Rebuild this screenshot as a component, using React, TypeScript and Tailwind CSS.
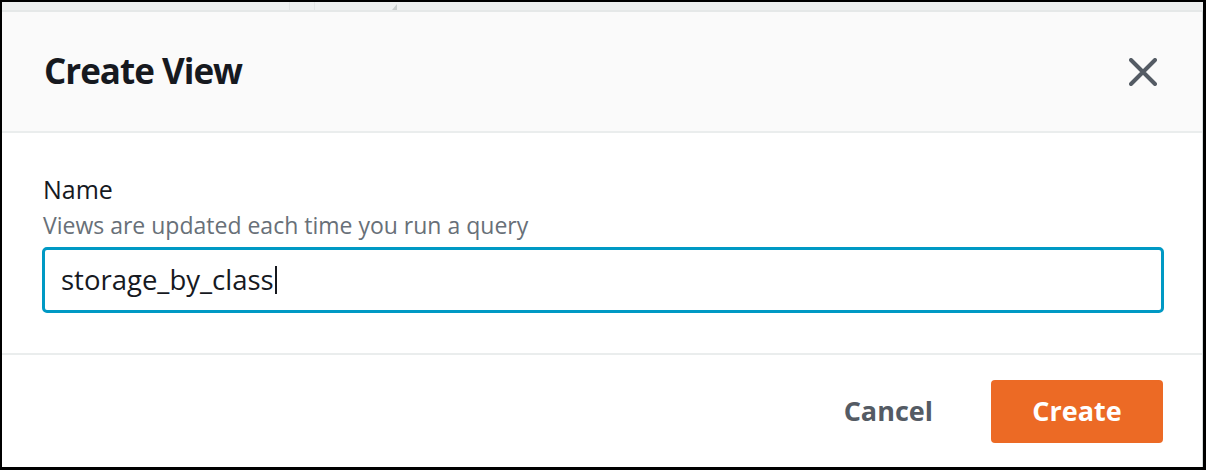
export default function App() {
  return (
    <div className="w-[1206px] h-[470px] bg-black pt-[2px] pl-[2px] pr-[3px] pb-[3px] flex flex-col font-['Open_Sans',sans-serif]">
      {/* page behind the dialog */}
      <div className="relative h-[8px] bg-[#eef0f0] shrink-0">
        <div className="absolute left-[287px] top-0 h-full w-px bg-[#e2e5e5]" />
        <div className="absolute left-[312px] top-0 h-full w-px bg-[#e2e5e5]" />
        <div className="absolute left-[390px] top-[2px] w-0 h-0 border-l-[5px] border-l-transparent border-b-[6px] border-b-[#c9cdcd]" />
      </div>

      <div className="flex-1 flex flex-col bg-white border-t-2 border-[#e5e8e8] border-r border-r-[#d5dbdb]">
        {/* header */}
        <div className="h-[121px] shrink-0 bg-[#fafafa] border-b-2 border-[#eaeded] flex items-center justify-between pl-[42px] pr-[45px]">
          <h1 className="text-[35px] font-bold text-[#16191f] tracking-[-1px]">Create View</h1>
          <svg width="28" height="28" viewBox="0 0 28 28" className="text-[#545b64]">
            <path d="M2 2 L26 26 M26 2 L2 26" stroke="currentColor" strokeWidth="4" strokeLinecap="round" />
          </svg>
        </div>

        {/* body */}
        <div className="h-[222px] shrink-0 border-b-2 border-[#eaeded] pl-[40px] pr-[38px] pt-[40px]">
          <div className="text-[25px] leading-[32px] text-[#16191f] pl-px">Name</div>
          <div className="text-[23px] leading-[31px] text-[#687078] mt-[5px] pl-px">Views are updated each time you run a query</div>
          <div className="mt-[6px] h-[66px] border-[3px] border-[#0099c4] rounded-[5px] flex items-center pl-[16px]">
            <span className="text-[27.5px] text-[#16191f]">storage_by_class</span>
            <span className="w-[2px] h-[28px] bg-[#16191f] ml-px" />
          </div>
        </div>

        {/* footer */}
        <div className="flex-1 flex items-center justify-end pr-[39px] gap-[58px]">
          <button className="text-[27px] font-bold text-[#545b64]">Cancel</button>
          <button className="w-[172px] h-[63px] rounded-[4px] bg-[#ec6a25] text-white text-[27px] font-bold">Create</button>
        </div>
      </div>
    </div>
  )
}
